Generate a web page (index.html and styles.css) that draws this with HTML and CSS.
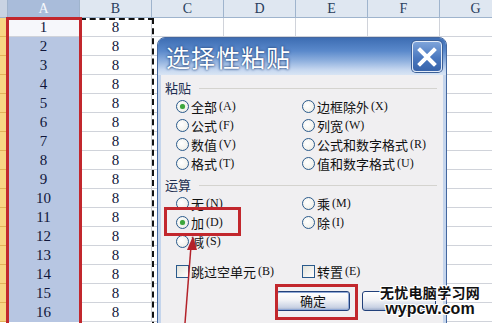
FILE: index.html
```html
<!DOCTYPE html>
<html lang="zh-CN">
<head>
    <meta charset="UTF-8">
    <meta name="viewport" content="width=device-width, initial-scale=1.0">
    <title>选择性粘贴</title>
    <link rel="stylesheet" href="styles.css">
</head>
<body>
    <div class="sheet">
        <div class="corner"></div><div class="ch sel">A</div><div class="ch">B</div><div class="ch">C</div><div class="ch">D</div><div class="ch">E</div><div class="ch">F</div><div class="ch">G</div>
        <div class="rh"></div><div class="a first">1</div><div class="b">8</div><div></div><div></div><div></div><div></div><div></div>
        <div class="rh"></div><div class="a">2</div><div class="b">8</div><div></div><div></div><div></div><div></div><div></div>
        <div class="rh"></div><div class="a">3</div><div class="b">8</div><div></div><div></div><div></div><div></div><div></div>
        <div class="rh"></div><div class="a">4</div><div class="b">8</div><div></div><div></div><div></div><div></div><div></div>
        <div class="rh"></div><div class="a">5</div><div class="b">8</div><div></div><div></div><div></div><div></div><div></div>
        <div class="rh"></div><div class="a">6</div><div class="b">8</div><div></div><div></div><div></div><div></div><div></div>
        <div class="rh"></div><div class="a">7</div><div class="b">8</div><div></div><div></div><div></div><div></div><div></div>
        <div class="rh"></div><div class="a">8</div><div class="b">8</div><div></div><div></div><div></div><div></div><div></div>
        <div class="rh"></div><div class="a">9</div><div class="b">8</div><div></div><div></div><div></div><div></div><div></div>
        <div class="rh"></div><div class="a">10</div><div class="b">8</div><div></div><div></div><div></div><div></div><div></div>
        <div class="rh"></div><div class="a">11</div><div class="b">8</div><div></div><div></div><div></div><div></div><div></div>
        <div class="rh"></div><div class="a">12</div><div class="b">8</div><div></div><div></div><div></div><div></div><div></div>
        <div class="rh"></div><div class="a">13</div><div class="b">8</div><div></div><div></div><div></div><div></div><div></div>
        <div class="rh"></div><div class="a">14</div><div class="b">8</div><div></div><div></div><div></div><div></div><div></div>
        <div class="rh"></div><div class="a">15</div><div class="b">8</div><div></div><div></div><div></div><div></div><div></div>
        <div class="rh"></div><div class="a">16</div><div class="b">8</div><div></div><div></div><div></div><div></div><div></div>
    </div>

    <!-- copy marquee on B, selection box on A -->
    <div class="marquee"></div>
    <div class="mark mark-col"></div>

    <div class="dialog">
        <div class="titlebar">
            <span class="title">选择性粘贴</span>
            <span class="close">
                <svg width="22" height="22" viewBox="0 0 22 22"><path d="M4 4 L18 18 M18 4 L4 18" stroke="#fff" stroke-width="4" stroke-linecap="square"/></svg>
            </span>
        </div>
        <div class="body">
            <div class="group-label">粘贴</div>
            <div class="options">
                <label class="opt"><span class="radio checked"></span>全部<em>(A)</em></label>
                <label class="opt"><span class="radio"></span>边框除外<em>(X)</em></label>
                <label class="opt"><span class="radio"></span>公式<em>(F)</em></label>
                <label class="opt"><span class="radio"></span>列宽<em>(W)</em></label>
                <label class="opt"><span class="radio"></span>数值<em>(V)</em></label>
                <label class="opt"><span class="radio"></span>公式和数字格式<em>(R)</em></label>
                <label class="opt"><span class="radio"></span>格式<em>(T)</em></label>
                <label class="opt"><span class="radio"></span>值和数字格式<em>(U)</em></label>
            </div>
            <div class="group-label ops">运算</div>
            <div class="options">
                <label class="opt"><span class="radio"></span>无<em>(N)</em></label>
                <label class="opt"><span class="radio"></span>乘<em>(M)</em></label>
                <label class="opt"><span class="radio checked"></span>加<em>(D)</em></label>
                <label class="opt"><span class="radio"></span>除<em>(I)</em></label>
                <label class="opt"><span class="radio"></span>减<em>(S)</em></label>
            </div>
            <div class="options checks">
                <label class="opt"><span class="check"></span>跳过空单元<em>(B)</em></label>
                <label class="opt"><span class="check"></span>转置<em>(E)</em></label>
            </div>
            <div class="actions">
                <button class="btn default">确定</button>
                <!-- caption hidden under the watermark -->
                <button class="btn" aria-label="取消"></button>
            </div>
        </div>
    </div>

    <div class="mark mark-add"></div>
    <div class="mark mark-ok"></div>

    <svg class="arrow" width="492" height="323" viewBox="0 0 492 323">
        <line x1="185" y1="323" x2="191" y2="246" stroke="#b3222a" stroke-width="1.5"/>
        <polygon points="193,236 187,250 197,250" fill="#b3222a"/>
    </svg>

    <div class="watermark">
        <div class="wm-cn">无忧电脑学习网</div>
        <div class="wm-en">wypcw.com</div>
    </div>
</body>
</html>
```

FILE: styles.css
```css
* {
    margin: 0;
    padding: 0;
    box-sizing: border-box;
}

body {
    width: 492px;
    height: 323px;
    overflow: hidden;
    position: relative;
    background: #fff;
    font-family: "Noto Sans CJK SC", "Noto Sans", sans-serif;
}

/* ---------- spreadsheet ---------- */

.sheet {
    display: grid;
    grid-template-columns: 8px repeat(7, 72px);
    grid-template-rows: 18px;
    grid-auto-rows: 19px;
    font-family: "Liberation Serif", "DejaVu Serif", serif;
}

.sheet > div {
    border-right: 1px solid #d0d3da;
    border-bottom: 1px solid #d0d3da;
    font-size: 15px;
    line-height: 18px;
    text-align: center;
    color: #10163a;
}

.sheet .corner {
    background: #c9d3e3;
    border-color: #9eb2cc;
}

.sheet .ch {
    background: #dfe7f1;
    border-right-color: #9fb4cd;
    border-bottom-color: #9fb4cd;
    color: #283d5c;
    font-size: 14px;
    line-height: 18px;
}

.sheet .ch.sel {
    background: #a9bcda;
    color: #f6f8fc;
}

.sheet .rh {
    background: #f8d684;
    border-right-color: #d9a548;
    border-bottom-color: #e2b35a;
}

.sheet .a {
    background: #b7c6e2;
    border-right-color: #b7c6e2;
    border-bottom-color: #b7c6e2;
}

.sheet .a.first {
    background: #f6f7fb;
    border-bottom-color: #d0d3da;
}

.marquee {
    position: absolute;
    left: 80px;
    top: 18px;
    width: 74px;
    height: 320px;
    border: 2px dashed #111;
}

.mark {
    position: absolute;
    border: 3px solid #c2272d;
}

.mark-col {
    left: 6px;
    top: 17px;
    width: 76px;
    height: 320px;
}

.mark-add {
    left: 164px;
    top: 207px;
    width: 77px;
    height: 29px;
}

.mark-ok {
    left: 275px;
    top: 284px;
    width: 83px;
    height: 36px;
}

/* ---------- dialog ---------- */

.dialog {
    position: absolute;
    left: 157px;
    top: 37px;
    width: 290px;
    height: 300px;
    border: 1px solid #44679f;
    border-radius: 8px 8px 0 0;
    background: #c5d5ec;
    overflow: hidden;
}

.titlebar {
    height: 37px;
    display: flex;
    align-items: center;
    justify-content: space-between;
    padding: 0 4px 0 8px;
    background: linear-gradient(to bottom, #3d6db3 0%, #5a89cb 35%, #8fb0de 62%, #c4d6ef 85%, #d9e5f4 100%);
}

.title {
    color: #fff;
    font-size: 24px;
    letter-spacing: 1px;
    line-height: 30px;
    text-shadow: 0 0 3px #2c4f86, 0 0 2px #2c4f86;
}

.close {
    width: 30px;
    height: 31px;
    display: flex;
    align-items: center;
    justify-content: center;
    border: 1px solid #e4ecf7;
    border-radius: 4px;
    background: linear-gradient(to bottom, #7ea4da, #4a78bf 55%, #3763aa);
    box-shadow: 0 0 0 1px #3b5f97;
}

.body {
    margin: 0 3px;
    height: 260px;
    background: #f0eff1;
    padding: 5px 6px 0 4px;
    font-size: 13px;
    color: #111;
}

.group-label {
    display: flex;
    align-items: center;
    height: 16px;
    line-height: 16px;
    color: #1e2f52;
}

.group-label::after {
    content: "";
    flex: 1;
    height: 1px;
    margin-left: 8px;
    background: #d4d3cf;
}

.group-label.ops {
    margin-top: 4px;
}

.options {
    display: grid;
    grid-template-columns: 126px 1fr;
    grid-auto-rows: 19px;
    padding-left: 11px;
    margin-top: 1px;
}

.opt {
    display: flex;
    align-items: center;
    white-space: nowrap;
}

.opt em {
    font-style: normal;
    font-family: "Liberation Serif", serif;
    font-size: 12px;
    margin-left: 2px;
}

.radio {
    width: 13px;
    height: 13px;
    margin-right: 2px;
    border: 1px solid #2a5a8c;
    border-radius: 50%;
    background: radial-gradient(circle at 40% 40%, #fff 0%, #f3f3ee 60%, #dcdcd4 100%);
    display: flex;
    align-items: center;
    justify-content: center;
}

.radio.checked::after {
    content: "";
    width: 5px;
    height: 5px;
    border-radius: 50%;
    background: #3ca63c;
    box-shadow: 0 0 1px #8ad08a;
}

.checks {
    margin-top: 11px;
}

.check {
    width: 13px;
    height: 13px;
    margin-right: 2px;
    border: 1px solid #2a5a8c;
    background: linear-gradient(135deg, #e2e2da, #fff);
}

.actions {
    display: flex;
    justify-content: flex-end;
    gap: 12px;
    margin-top: 10px;
    padding-right: 1px;
}

.btn {
    width: 74px;
    height: 20px;
    border: 1px solid #22407a;
    border-radius: 3px;
    background: linear-gradient(to bottom, #ffffff, #f1f2f6 45%, #c9d2e4 85%, #9eadcb);
    font-family: "Noto Sans CJK SC", sans-serif;
    font-size: 13px;
    line-height: 16px;
    color: #111;
}

.btn.default {
    box-shadow: inset 0 0 0 1px #8fa8d6;
}

/* ---------- overlays ---------- */

.arrow {
    position: absolute;
    left: 0;
    top: 0;
}

.watermark {
    position: absolute;
    left: 378px;
    top: 285px;
    width: 104px;
    display: flex;
    flex-direction: column;
    align-items: center;
    gap: 1px;
    color: #111;
    font-weight: bold;
    text-shadow: 1px 1px 0 #fff, -1px -1px 0 #fff, 1px -1px 0 #fff, -1px 1px 0 #fff,
        0 1px 0 #fff, 0 -1px 0 #fff, 1px 0 0 #fff, -1px 0 0 #fff;
}

.wm-cn {
    font-family: "Noto Sans CJK SC", sans-serif;
    font-size: 14px;
    line-height: 15px;
    height: 15px;
    letter-spacing: 0.3px;
}

.wm-en {
    font-family: "Liberation Sans", Arial, sans-serif;
    font-size: 16px;
    line-height: 15px;
    height: 15px;
}
```
